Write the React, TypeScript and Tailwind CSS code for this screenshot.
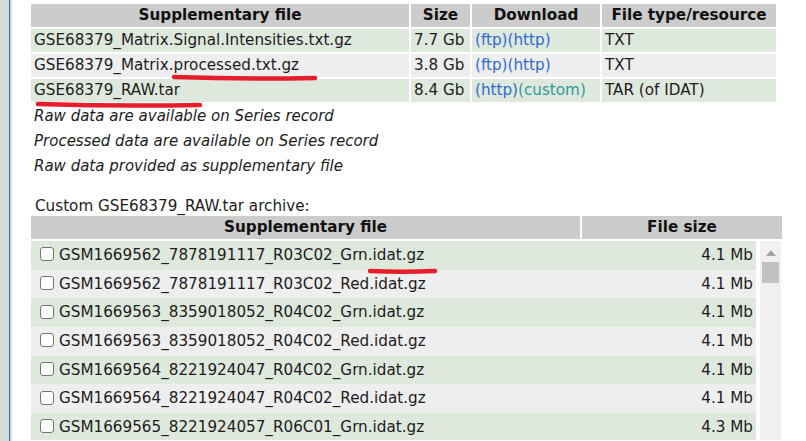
const topRows = [
  { name: "GSE68379_Matrix.Signal.Intensities.txt.gz", size: "7.7 Gb", links: [["(ftp)", "b"], ["(http)", "b"]], type: "TXT" },
  { name: "GSE68379_Matrix.processed.txt.gz", size: "3.8 Gb", links: [["(ftp)", "b"], ["(http)", "b"]], type: "TXT" },
  { name: "GSE68379_RAW.tar", size: "8.4 Gb", links: [["(http)", "b"], ["(custom)", "t"]], type: "TAR (of IDAT)" },
];

const notes = [
  "Raw data are available on Series record",
  "Processed data are available on Series record",
  "Raw data provided as supplementary file",
];

const archiveFiles = [
  ["GSM1669562_7878191117_R03C02_Grn.idat.gz", "4.1 Mb"],
  ["GSM1669562_7878191117_R03C02_Red.idat.gz", "4.1 Mb"],
  ["GSM1669563_8359018052_R04C02_Grn.idat.gz", "4.1 Mb"],
  ["GSM1669563_8359018052_R04C02_Red.idat.gz", "4.1 Mb"],
  ["GSM1669564_8221924047_R04C02_Grn.idat.gz", "4.1 Mb"],
  ["GSM1669564_8221924047_R04C02_Red.idat.gz", "4.1 Mb"],
  ["GSM1669565_8221924057_R06C01_Grn.idat.gz", "4.3 Mb"],
];

export default function App() {
  return (
    <div className="relative flex h-[441px] w-[806px] overflow-hidden bg-white font-['DejaVu_Sans',Verdana,sans-serif] text-[15.2px] text-[#1c1c1c]">
      {/* side frame */}
      <div className="flex shrink-0">
        <div className="w-[9px] bg-[#d2ddd9]" />
        <div className="w-px bg-[#3f6fa6]" />
        <div className="w-[2px] bg-[#c7ddf0]" />
      </div>

      <div className="flex flex-1 flex-col pl-[19px] pt-[4px]">
        <div className="grid grid-cols-[378px_59px_128px_174px] gap-[2px]">
          <HeadCell>Supplementary file</HeadCell>
          <HeadCell>Size</HeadCell>
          <HeadCell>Download</HeadCell>
          <HeadCell>File type/resource</HeadCell>
          {topRows.map((row, i) => (
            <Row key={row.name} bg={i % 2 === 0 ? "bg-[#dfe8dc]" : "bg-[#eeeeee]"} row={row} />
          ))}
        </div>

        <div className="pl-[3px] pt-[2px] text-[15px] italic leading-[25px]">
          {notes.map((n) => (
            <div key={n}>{n}</div>
          ))}
        </div>

        <div className="mt-[18px] pl-[4px] leading-[18px]">Custom GSE68379_RAW.tar archive:</div>

        <div className="mt-px grid w-[751px] grid-cols-[549px_200px] gap-[2px]">
          <HeadCell>Supplementary file</HeadCell>
          <HeadCell>File size</HeadCell>
        </div>

        <div className="mt-[2px] flex h-[199px] w-[751px] overflow-hidden">
          <div className="w-[725px]">
            {archiveFiles.map(([name, size], i) => (
              <div
                key={name}
                className={`flex h-[28.67px] items-center ${i % 2 === 0 ? "bg-[#dfe8dc]" : "bg-[#eeeeee]"}`}
              >
                <span className="ml-[9px] mr-[5px] h-[14px] w-[14px] -translate-y-[1px] rounded-[3px] border border-[#767676] bg-white" />
                <span className="flex-1">{name}</span>
                <span className="pr-[3px]">{size}</span>
              </div>
            ))}
          </div>
          <div className="ml-[4px] flex w-[21px] flex-col items-center bg-[#f0f0f0]">
            <svg width="10" height="6" viewBox="0 0 10 6" className="mt-[9px]">
              <path d="M0 6 L5 0 L10 6 Z" fill="#a3a3a3" />
            </svg>
            <div className="mt-[6px] h-[21px] w-[17px] bg-[#c1c1c1]" />
          </div>
        </div>
      </div>

      {/* hand-drawn red marks */}
      <svg className="pointer-events-none absolute left-0 top-0" width="806" height="441">
        <path d="M174 77 Q245 79.5 315 78" stroke="#e61e2b" strokeWidth="4.5" strokeLinecap="round" fill="none" />
        <path d="M38 104 Q120 106.5 200 105" stroke="#e61e2b" strokeWidth="4.5" strokeLinecap="round" fill="none" />
        <path d="M370 271 Q402 272.5 435 271" stroke="#e61e2b" strokeWidth="4.5" strokeLinecap="round" fill="none" />
      </svg>
    </div>
  );
}

function HeadCell({ children }: { children: React.ReactNode }) {
  return (
    <div className="flex h-[23px] items-center justify-center bg-[#cccccc] font-bold text-[#111]">
      {children}
    </div>
  );
}

function Row({ bg, row }: { bg: string; row: (typeof topRows)[number] }) {
  return (
    <>
      <div className={`flex h-[23px] items-center pl-[3px] ${bg}`}>{row.name}</div>
      <div className={`flex h-[23px] items-center pl-[3px] ${bg}`}>{row.size}</div>
      <div className={`flex h-[23px] items-center pl-[3px] ${bg}`}>
        {row.links.map(([label, kind]) => (
          <span key={label} className={kind === "t" ? "text-[#2a9c98]" : "text-[#2e6ad4]"}>
            {label}
          </span>
        ))}
      </div>
      <div className={`flex h-[23px] items-center pl-[3px] ${bg}`}>{row.type}</div>
    </>
  );
}
